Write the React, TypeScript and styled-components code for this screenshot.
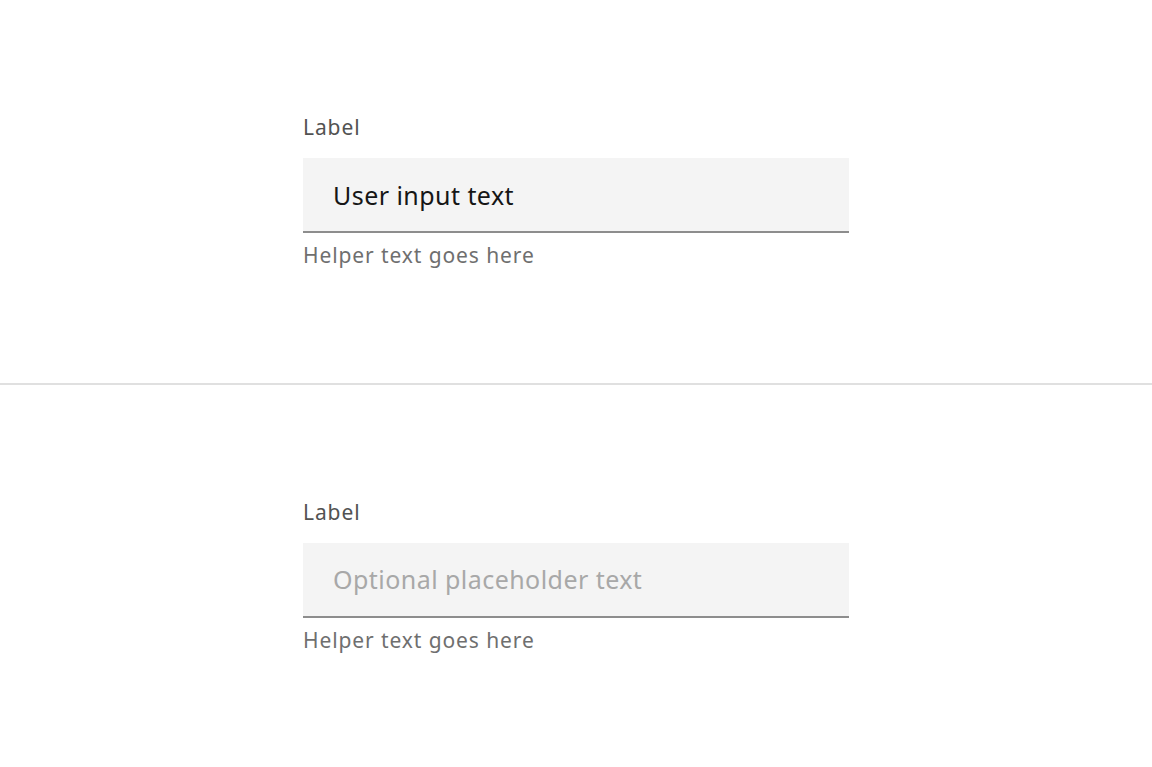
import React from "react";
import styled, { createGlobalStyle } from "styled-components";

const GlobalStyle = createGlobalStyle`
  html, body {
    margin: 0;
    padding: 0;
    background: #ffffff;
  }
  body {
    font-family: "Noto Sans", "Open Sans", sans-serif;
  }
`;

const Page = styled.div`
  display: flex;
  flex-direction: column;
  width: 1152px;
  height: 767px;
`;

const Section = styled.section`
  flex: 1;
  display: flex;
  align-items: center;
  justify-content: center;
`;

const Divider = styled.hr`
  margin: 0;
  border: none;
  height: 2px;
  background: #e0e0e0;
`;

const Field = styled.div`
  display: flex;
  flex-direction: column;
  width: 546px;
`;

const Label = styled.label`
  font-size: 21px;
  line-height: 30px;
  letter-spacing: 0.9px;
  color: #525252;
  margin-bottom: 16px;
`;

const Input = styled.input`
  appearance: none;
  box-sizing: border-box;
  height: 75px;
  padding: 0 30px;
  border: none;
  border-bottom: 2px solid #8d8d8d;
  background: #f4f4f4;
  font-family: inherit;
  font-size: 25px;
  letter-spacing: 0.45px;
  color: #161616;
  outline: none;

  &::placeholder {
    color: #a8a8a8;
  }
`;

const Helper = styled.div`
  font-size: 21px;
  line-height: 30px;
  letter-spacing: 0.9px;
  color: #6f6f6f;
  margin-top: 7px;
`;

type TextFieldProps = {
  id: string;
  value?: string;
  placeholder?: string;
};

const TextField: React.FC<TextFieldProps> = ({ id, value, placeholder }) => (
  <Field>
    <Label htmlFor={id}>Label</Label>
    <Input id={id} defaultValue={value} placeholder={placeholder} />
    <Helper>Helper text goes here</Helper>
  </Field>
);

export default function App() {
  return (
    <Page>
      <GlobalStyle />
      <Section>
        <TextField id="filled" value="User input text" />
      </Section>
      <Divider />
      <Section>
        <TextField id="empty" placeholder="Optional placeholder text" />
      </Section>
    </Page>
  );
}
